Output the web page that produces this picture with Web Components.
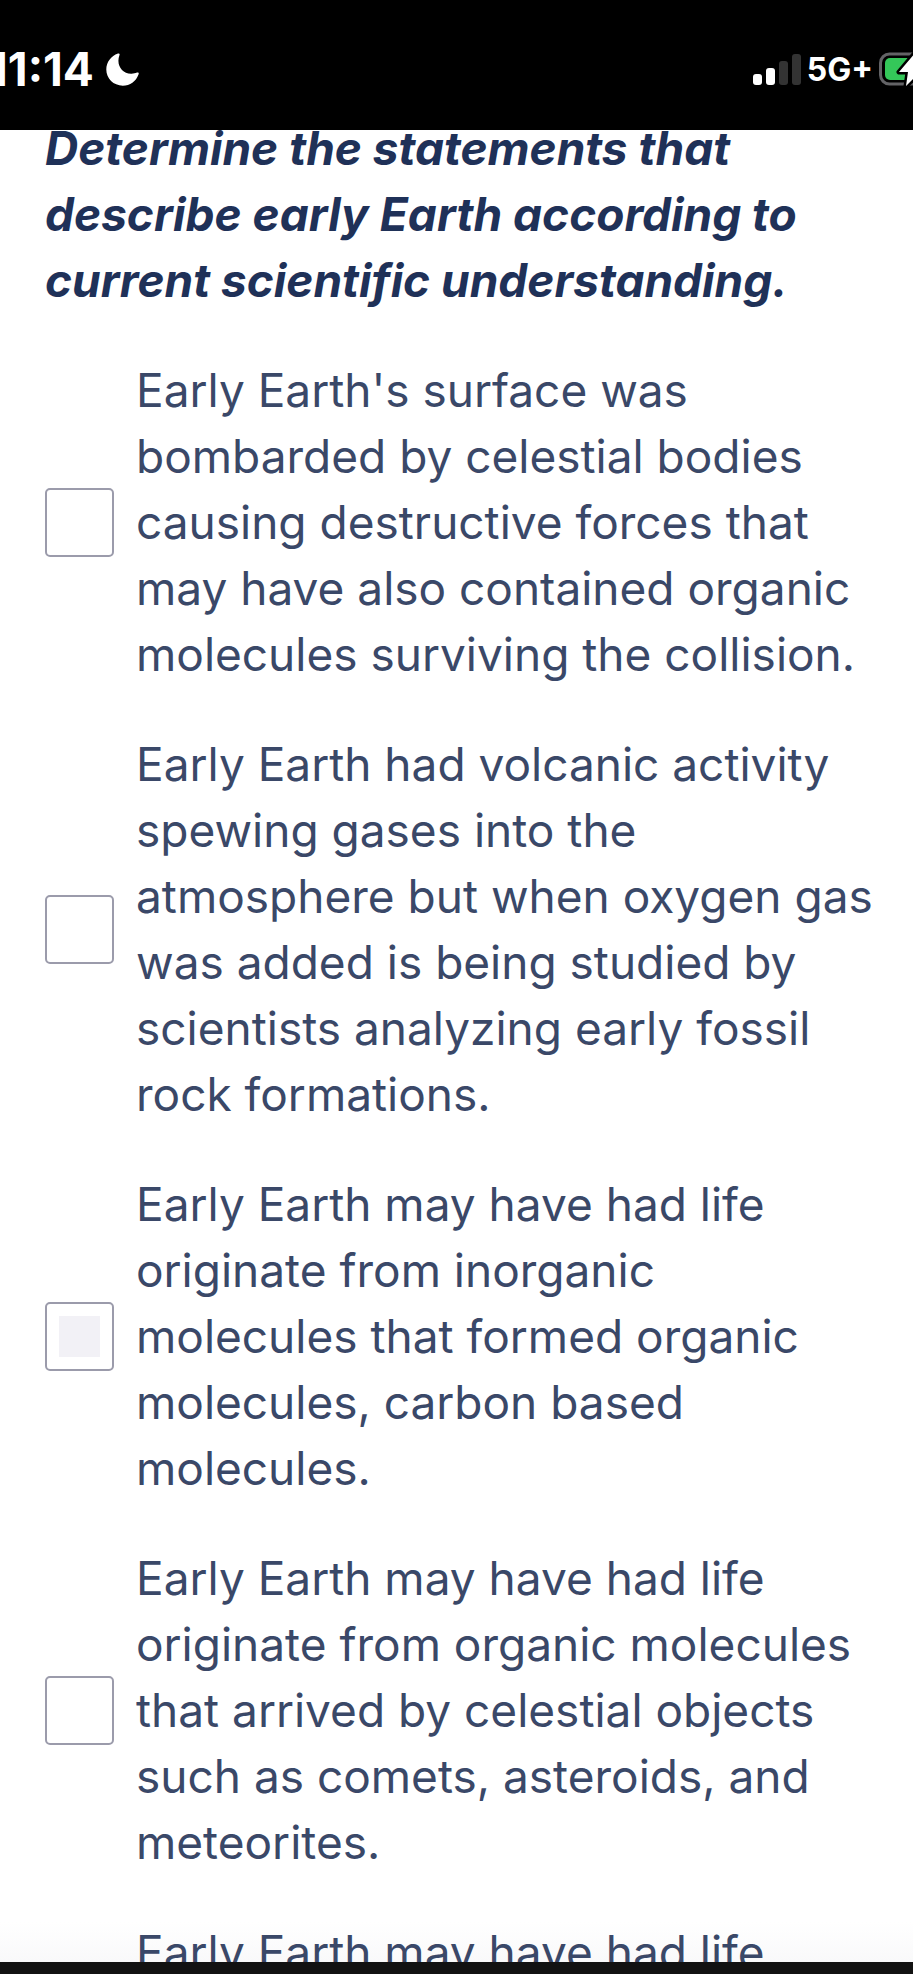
<!DOCTYPE html>
<html lang="en">
<head>
<meta charset="utf-8">
<meta name="viewport" content="width=device-width, initial-scale=1">
<title>Early Earth</title>
<style>
	body {
		margin: 0;
		font-family: Inter, "Liberation Sans", sans-serif;
		background: #fff;
	}
</style>
</head>
<body>
<quiz-screen>
	<status-bar slot="status" time="11:14" network="5G+" bars="2"></status-bar>
	<quiz-question>
		<span slot="prompt">Determine the statements that describe early Earth according to current scientific understanding.</span>
		<quiz-option>Early Earth's surface was bombarded by celestial bodies causing destructive forces that may have also contained organic molecules surviving the collision.</quiz-option>
		<quiz-option>Early Earth had volcanic activity spewing gases into the atmosphere but when oxygen gas was added is being studied by scientists analyzing early fossil rock formations.</quiz-option>
		<quiz-option active>Early Earth may have had life originate from inorganic molecules that formed organic molecules, carbon based molecules.</quiz-option>
		<quiz-option>Early Earth may have had life originate from organic molecules that arrived by celestial objects such as comets, asteroids, and meteorites.</quiz-option>
		<quiz-option>Early Earth may have had life</quiz-option>
	</quiz-question>
</quiz-screen>

<script>
class QuizScreen extends HTMLElement {
	constructor() {
		super();

		this.shadow = this.attachShadow({ mode: "open" });
	}

	connectedCallback() {
		this.shadow.innerHTML = `
		<style>
			:host {
				display: grid;
				grid-template-rows: auto 1fr 12px;
				height: 100vh;
			}
			main {
				min-height: 0;
				overflow: hidden auto;
				scrollbar-width: none;
				background: linear-gradient(#fff, #fff calc(100% - 40px), #f9f9fa);
			}
			footer {
				background: #121212;
			}
		</style>

		<slot name="status"></slot>
		<main><slot></slot></main>
		<footer></footer>`;
	}
}

class StatusBar extends HTMLElement {
	constructor() {
		super();

		this.shadow = this.attachShadow({ mode: "open" });
	}

	get time() {
		return this.getAttribute("time");
	}

	get network() {
		return this.getAttribute("network");
	}

	get bars() {
		return Number(this.getAttribute("bars"));
	}

	renderBars() {
		return [11, 17, 24, 31]
			.map((height, i) => {
				const fill = i < this.bars ? "#fff" : "#333";
				return `<rect x="${i * 13}" y="${31 - height}" width="9" height="${height}" rx="3" fill="${fill}"/>`;
			})
			.join("");
	}

	connectedCallback() {
		this.shadow.innerHTML = `
		<style>
			:host {
				display: flex;
				align-items: center;
				justify-content: space-between;
				box-sizing: border-box;
				height: 130px;
				padding-top: 8px;
				overflow: hidden;
				color: #fff;
				background: #000;
			}
			div {
				display: flex;
				align-items: center;
			}
			.left {
				gap: 12px;
				margin-left: -12px;
			}
			.right {
				gap: 6px;
				margin-right: -28px;
			}
			time {
				font-size: 46px;
				font-weight: 700;
			}
			span {
				font-size: 32px;
				font-weight: 700;
			}
			svg {
				display: block;
				flex: none;
			}
		</style>

		<div class="left">
			<time>${this.time}</time>
			<svg width="33" height="33" viewBox="0 0 33 33" aria-hidden="true">
				<path fill="#fff" d="M12 .6C13.200 .1 14 .8 13.500 2C9.800 11.800 16 20.500 25 20.700C27.200 20.800 29.300 20.300 31 19.600C32.300 19.100 33.100 20 32.600 21.200C30 28.500 24 32.700 16.800 32.700C7.500 32.700.3 25.600.3 16.600C.3 9.300 5 3 12 .6Z"/>
			</svg>
		</div>
		<div class="right">
			<svg width="48" height="31" viewBox="0 0 48 31" aria-hidden="true">${this.renderBars()}</svg>
			<span>${this.network}</span>
			<svg width="62" height="36" viewBox="0 0 62 36" aria-hidden="true">
				<rect x="1.500" y="3" width="55" height="30" rx="9" fill="none" stroke="#636366" stroke-width="3"/>
				<rect x="6" y="7" width="46" height="22" rx="5" fill="#34c759"/>
				<path d="M36 2L20 21H29L27 35L46 16H35Z" fill="#fff" stroke="#000" stroke-width="5" stroke-linejoin="round" paint-order="stroke"/>
			</svg>
		</div>`;
	}
}

class QuizQuestion extends HTMLElement {
	constructor() {
		super();

		this.shadow = this.attachShadow({ mode: "open" });
	}

	connectedCallback() {
		this.shadow.innerHTML = `
		<style>
			:host {
				display: block;
				padding: 0 36px 44px 45px;
				margin-top: -15px;
				font-size: 46px;
				line-height: 66px;
			}
			h1 {
				margin: 0 0 44px;
				font-size: inherit;
				font-style: italic;
				font-weight: 700;
				color: #1f3158;
			}
			.options {
				display: grid;
				gap: 44px;
			}
		</style>

		<h1><slot name="prompt"></slot></h1>
		<div class="options"><slot></slot></div>`;
	}
}

class QuizOption extends HTMLElement {
	constructor() {
		super();

		this.shadow = this.attachShadow({ mode: "open" });
	}

	connectedCallback() {
		this.shadow.innerHTML = `
		<style>
			:host {
				display: block;
				color: #3a4868;
			}
			label {
				display: grid;
				grid-template-columns: 69px 1fr;
				gap: 22px;
				align-items: center;
				min-height: 330px;
			}
			input {
				appearance: none;
				box-sizing: border-box;
				width: 69px;
				height: 69px;
				margin: 0;
				border: 2px solid #9b9bab;
				border-radius: 5px;
				background: #fff content-box;
				padding: 12px;
			}
			:host([active]) input {
				background-color: #f2f1f6;
			}
			span {
				align-self: start;
			}
		</style>

		<label>
			<input type="checkbox">
			<span><slot></slot></span>
		</label>`;
	}
}

customElements.define("quiz-screen", QuizScreen);
customElements.define("status-bar", StatusBar);
customElements.define("quiz-question", QuizQuestion);
customElements.define("quiz-option", QuizOption);
</script>
</body>
</html>
